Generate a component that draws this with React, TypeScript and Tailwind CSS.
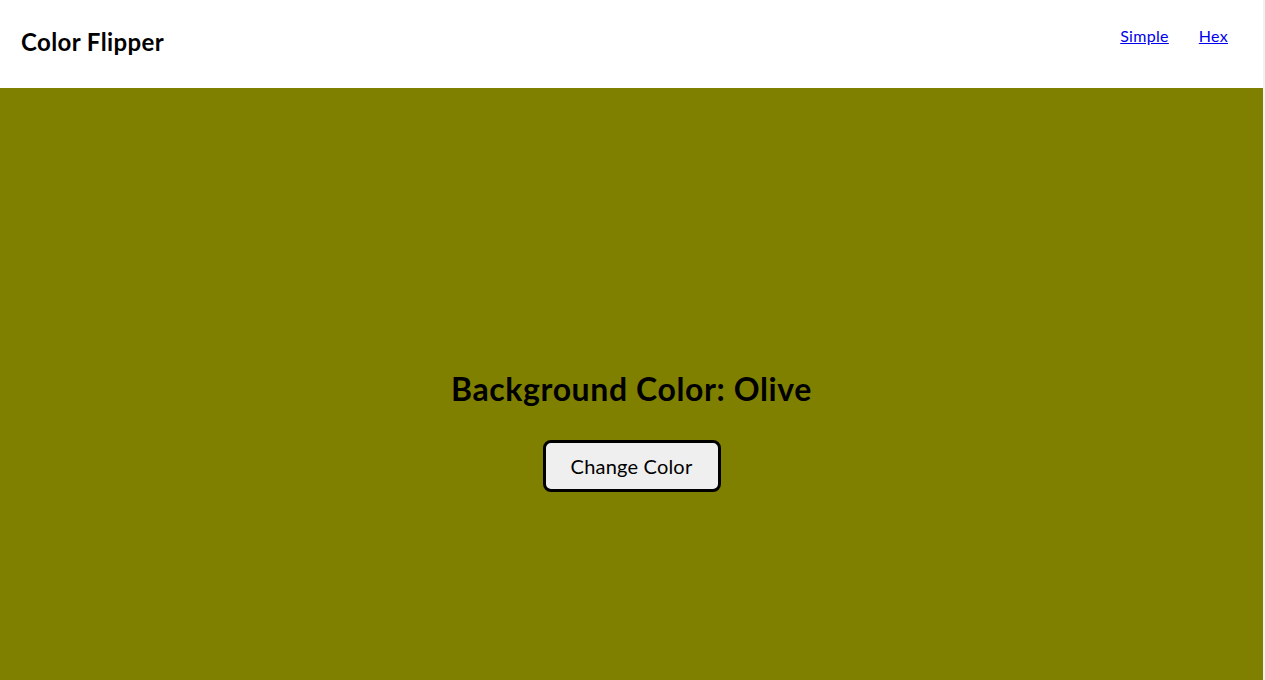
import React, { useState } from 'react';

const colors = ['Olive', 'Teal', 'Maroon', 'Navy', 'Purple', 'Gray'];

const App = () => {
  const [index, setIndex] = useState(0);
  const color = colors[index];

  return (
    <div className="font-['Lato','Noto_Sans',sans-serif] text-black border-r-2 border-[#f1f1f1]">
      <nav className="h-[88px] bg-white flex items-start justify-between px-[21px]">
        <h1 className="mt-[28px] text-[24px] font-bold leading-[28px] tracking-[0.4px]">Color Flipper</h1>
        <ul className="mt-[26px] mr-[14px] flex gap-[30px] text-[16px] leading-[20px] tracking-[0.3px]">
          <li>
            <a href="#" className="text-[#0000ee] underline">Simple</a>
          </li>
          <li>
            <a href="#" className="text-[#0000ee] underline">Hex</a>
          </li>
        </ul>
      </nav>
      <main className="h-[680px] pt-[6px] bg-[#808000] flex flex-col items-center justify-center">
        <h2 className="text-[32px] font-bold leading-[38px] tracking-[0.6px]">Background Color: {color}</h2>
        <button
          onClick={() => setIndex((index + 1) % colors.length)}
          className="mt-[32px] w-[178px] h-[52px] border-[3px] border-black rounded-[8px] bg-[#efefef] text-[20px] tracking-[0.2px]"
        >
          Change Color
        </button>
      </main>
    </div>
  );
};

export default App;
